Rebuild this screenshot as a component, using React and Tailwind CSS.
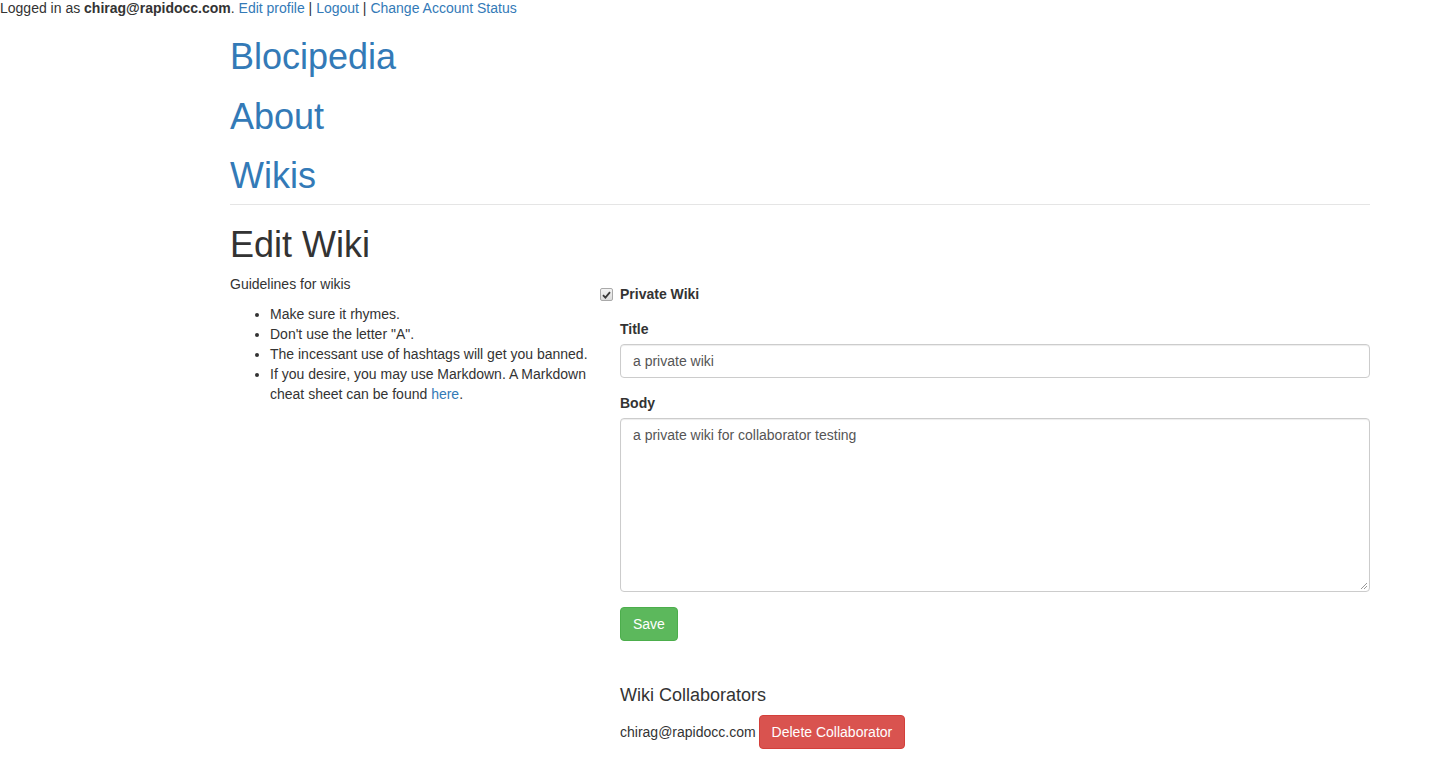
import React from 'react';

const FONT = { fontFamily: '"Liberation Sans", Arial, sans-serif' };

const GUIDELINES = [
  'Make sure it rhymes.',
  'Don\'t use the letter "A".',
  'The incessant use of hashtags will get you banned.',
];

function CheckMark() {
  return (
    <span className="absolute left-[-20px] top-[4px] w-[13px] h-[13px] border border-[#a9a9a9] rounded-[2px] bg-gradient-to-b from-[#f4f4f4] to-[#dcdcdc] flex items-center justify-center">
      <svg width="9" height="8" viewBox="0 0 9 8">
        <path d="M1 4.2 L3.4 6.6 L8 1.2" fill="none" stroke="#3a3a3a" strokeWidth="1.8" />
      </svg>
    </span>
  );
}

export default function App() {
  return (
    <div className="bg-white text-[#333] text-[14px] min-h-[762px]" style={FONT}>
      {/* session bar */}
      <div className="h-[16px] leading-[16px]">
        Logged in as <b>chirag@rapidocc.com</b>.{' '}
        <a className="text-[#337ab7]" href="#">Edit profile</a> |{' '}
        <a className="text-[#337ab7]" href="#">Logout</a> |{' '}
        <a className="text-[#337ab7]" href="#">Change Account Status</a>
      </div>

      <div className="ml-[230px] w-[1140px]">
        <div className="pt-[21px] flex flex-col gap-[20px] text-[36px] leading-[39.6px]">
          <a className="text-[#337ab7] self-start" href="#">Blocipedia</a>
          <a className="text-[#337ab7] self-start" href="#">About</a>
          <a className="text-[#337ab7] self-start" href="#">Wikis</a>
        </div>
        <hr className="mt-[8px] border-0 border-t border-[#e5e5e5]" />

        <h1 className="mt-[20px] text-[36px] leading-[39.6px]">Edit Wiki</h1>

        <div className="mt-[10px] flex gap-[30px]">
          {/* guidelines */}
          <div className="w-[360px] leading-[20px]">
            <p>Guidelines for wikis</p>
            <ul className="mt-[10px] pl-[40px] list-disc">
              {GUIDELINES.map((g) => (
                <li key={g}>{g}</li>
              ))}
              <li>
                If you desire, you may use Markdown. A Markdown cheat sheet can be found{' '}
                <a className="text-[#337ab7]" href="#">here</a>.
              </li>
            </ul>
          </div>

          {/* form */}
          <div className="w-[750px] leading-[20px]">
            <div className="mt-[10px] mb-[15px]">
              <label className="relative font-bold block">
                <CheckMark />
                Private Wiki
              </label>
            </div>

            <div className="mb-[15px]">
              <label className="block font-bold mb-[5px]">Title</label>
              <div className="h-[34px] px-[12px] py-[6px] border border-[#ccc] rounded-[4px] shadow-[inset_0_1px_1px_rgba(0,0,0,0.075)] text-[#555]">
                a private wiki
              </div>
            </div>

            <div className="mb-[15px]">
              <label className="block font-bold mb-[5px]">Body</label>
              <div className="relative h-[174px] px-[12px] py-[6px] border border-[#ccc] rounded-[4px] shadow-[inset_0_1px_1px_rgba(0,0,0,0.075)] text-[#555]">
                a private wiki for collaborator testing
                <svg className="absolute right-[1px] bottom-[1px]" width="9" height="9" viewBox="0 0 9 9">
                  <path d="M8 2 L2 8 M8 5 L5 8" stroke="#999" strokeWidth="1" />
                </svg>
              </div>
            </div>

            <button className="h-[34px] px-[12px] border border-[#4cae4c] bg-[#5cb85c] text-white rounded-[4px]">
              Save
            </button>

            <h4 className="mt-[45px] mb-[9px] text-[18px] leading-[19.8px]">Wiki Collaborators</h4>
            <div className="flex items-center gap-[3px]">
              <span>chirag@rapidocc.com</span>
              <button className="h-[34px] px-[12px] border border-[#d43f3a] bg-[#d9534f] text-white rounded-[4px]">
                Delete Collaborator
              </button>
            </div>
          </div>
        </div>
      </div>
    </div>
  );
}
